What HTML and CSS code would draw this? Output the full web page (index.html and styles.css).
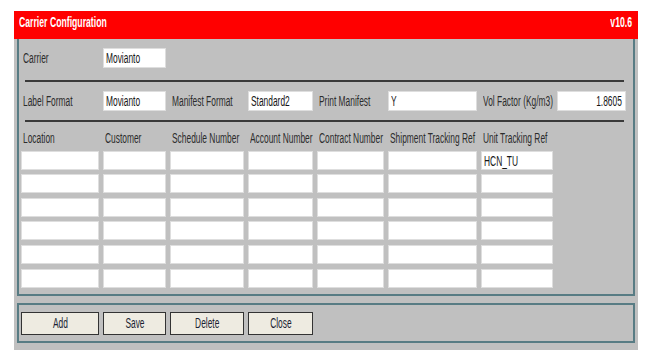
FILE: index.html
```html
<!DOCTYPE html>
<html>
<head>
<link rel="stylesheet" href="styles.css">
</head>
<body>

<div class="window">

<div class="titlebar">
  <span class="txt">Carrier Configuration</span>
  <span class="txt end">v10.6</span>
</div>

<div class="panel main">

  <div class="cols row1">
    <div class="lbl"><span class="txt">Carrier</span></div>
    <div class="field"><span class="txt">Movianto</span></div>
  </div>

  <div class="rule"></div>

  <div class="cols row2">
    <div class="lbl"><span class="txt">Label Format</span></div>
    <div class="field"><span class="txt">Movianto</span></div>
    <div class="lbl"><span class="txt">Manifest Format</span></div>
    <div class="field"><span class="txt">Standard2</span></div>
    <div class="lbl"><span class="txt">Print Manifest</span></div>
    <div class="field"><span class="txt">Y</span></div>
    <div class="lbl"><span class="txt">Vol Factor (Kg/m3)</span></div>
    <div class="field num"><span class="txt end">1.8605</span></div>
  </div>

  <div class="rule"></div>

  <!-- tracking refs table -->
  <div class="cols refs" id="refs">
    <div class="hdr"><span class="txt">Location</span></div>
    <div class="hdr"><span class="txt">Customer</span></div>
    <div class="hdr"><span class="txt">Schedule Number</span></div>
    <div class="hdr"><span class="txt">Account Number</span></div>
    <div class="hdr"><span class="txt">Contract Number</span></div>
    <div class="hdr"><span class="txt">Shipment Tracking Ref</span></div>
    <div class="hdr"><span class="txt">Unit Tracking Ref</span></div>
    <div></div>

    <div class="field"></div><div class="field"></div><div class="field"></div><div class="field"></div><div class="field"></div><div class="field"></div><div class="field"><span class="txt">HCN_TU</span></div><div></div>
    <div class="field"></div><div class="field"></div><div class="field"></div><div class="field"></div><div class="field"></div><div class="field"></div><div class="field"></div><div></div>
    <div class="field"></div><div class="field"></div><div class="field"></div><div class="field"></div><div class="field"></div><div class="field"></div><div class="field"></div><div></div>
    <div class="field"></div><div class="field"></div><div class="field"></div><div class="field"></div><div class="field"></div><div class="field"></div><div class="field"></div><div></div>
    <div class="field"></div><div class="field"></div><div class="field"></div><div class="field"></div><div class="field"></div><div class="field"></div><div class="field"></div><div></div>
    <div class="field"></div><div class="field"></div><div class="field"></div><div class="field"></div><div class="field"></div><div class="field"></div><div class="field"></div><div></div>
  </div>

</div>

<div class="panel actions">
  <div class="cols">
    <button class="btn"><span class="txt mid">Add</span></button>
    <button class="btn"><span class="txt mid">Save</span></button>
    <button class="btn"><span class="txt mid">Delete</span></button>
    <button class="btn"><span class="txt mid">Close</span></button>
  </div>
</div>

</div>

</body>
</html>
```

FILE: styles.css
```css
body {
  margin: 0;
  background-color: #ffffff;
  font-family: "Liberation Sans", Arial, sans-serif;
}

/* the old form is drawn in a squeezed narrow face */
.txt {
  display: inline-block;
  white-space: nowrap;
  transform: scaleX(0.6);
  transform-origin: left center;
}

.txt.end {
  transform-origin: right center;
}

.txt.mid {
  transform-origin: center center;
}

/* window */
.window {
  margin: 11px 0 0 14px;
  width: 624px;
  background-color: #c0c0c0;
  padding: 0 3px 7px 3px;
  box-sizing: border-box;
}

.titlebar {
  display: flex;
  justify-content: space-between;
  height: 28px;
  margin: 0 -3px;
  padding: 3px 6px 0 5px;
  box-sizing: border-box;
  background-color: #ff0000;
  color: #ffffff;
  font-weight: bold;
  font-size: 14px;
  line-height: 17px;
}

.titlebar .txt {
  transform: scaleX(0.62);
}

/* panels */
.panel {
  border: 2px solid #587c84;
  padding-left: 2px;
}

.main {
  border-top: none;
  padding-top: 8px;
  padding-bottom: 6px;
}

.actions {
  margin-top: 7px;
  padding-top: 7px;
  padding-bottom: 6px;
}

/* shared column grid */
.cols {
  display: grid;
  grid-template-columns: 78px 63px 74px 65px 67px 89px 72px 69px;
  column-gap: 4px;
}

.row1, .row2 {
  height: 20px;
  align-items: center;
}

.refs {
  grid-auto-rows: 19px;
  row-gap: 4.6px;
}

.rule {
  border-top: 2px solid #3a3a3a;
  margin: 13px 9px 8px 4px;
}

.row2 + .rule {
  margin-top: 10px;
  margin-bottom: 5px;
}

.lbl, .hdr {
  font-size: 14px;
  line-height: 20px;
  color: #2c2c2c;
  padding-left: 2px;
  padding-top: 1px;
  white-space: nowrap;
}

.hdr {
  line-height: 19px;
  padding-top: 2px;
}

.field {
  height: 20px;
  padding: 0 3px 0 2px;
  box-sizing: border-box;
  border: 1px solid #dedede;
  background-color: #ffffff;
  font-size: 14px;
  line-height: 19px;
  color: #151515;
  white-space: nowrap;
  overflow: hidden;
}

.refs .field {
  height: 19px;
  line-height: 18px;
}

.num {
  text-align: right;
}

.btn {
  height: 23px;
  margin: 0;
  padding: 0;
  border: 1px solid #333333;
  background-color: #eeebe1;
  font-family: inherit;
  font-size: 14px;
  color: #1b1f33;
}
```
